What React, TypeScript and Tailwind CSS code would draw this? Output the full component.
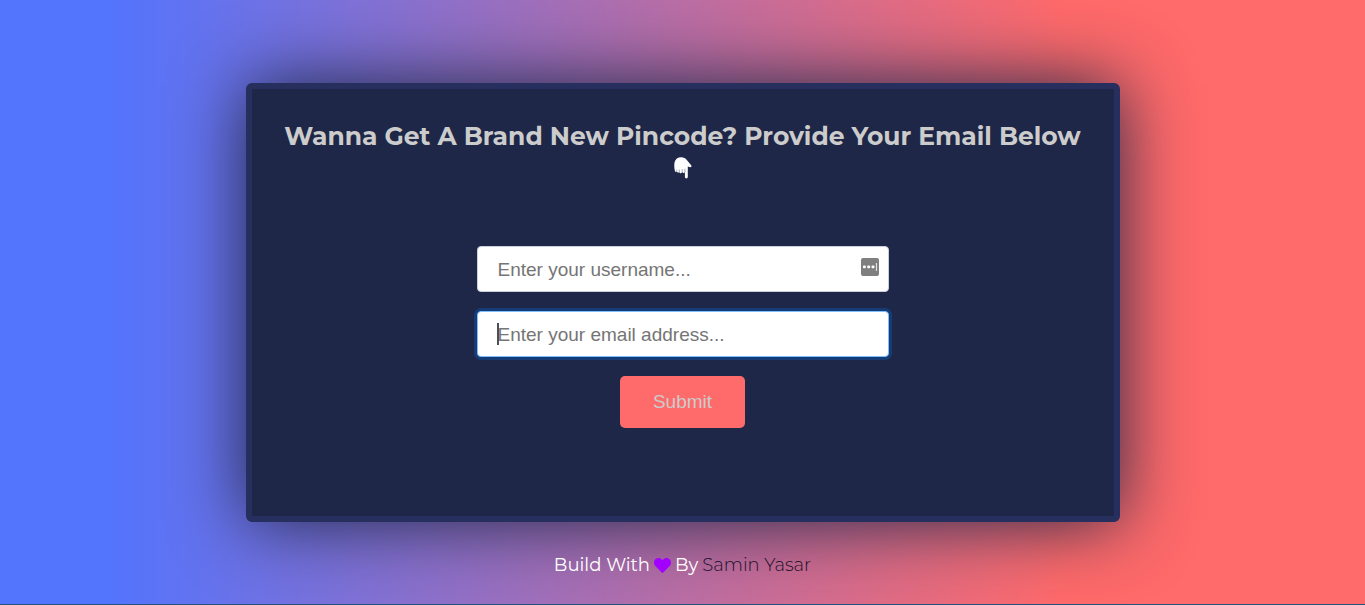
import React from "react";

function HandPointingDown() {
  return (
    <svg viewBox="0 0 18 22" className="h-[22px] w-[18px]" fill="#ffffff" aria-hidden="true">
      <path d="M1 14.2C0.3 11.2 0 8.2 0.5 5.4C1.2 2 3.9 0.2 7.2 0.2C9.8 0.2 11.4 1.2 12.8 3L17.2 8.2C18 9.3 17.1 10.5 15.9 10.2L13.8 9.4V19.8C13.8 21.9 10.9 21.9 10.9 19.8V15C10.6 16.4 8.6 16.5 8.2 15.1C7.8 16.6 5.6 16.6 5.2 15C4.6 16.2 3 16 2.7 14.6C2.2 15.2 1.2 15 1 14.2Z" />
      <path d="M2.8 14.6V12.6M5.3 15.2V12.6M8.2 15.2V12.2M10.9 15.4V11.8" stroke="#1e2747" strokeWidth="0.4" fill="none" />
    </svg>
  );
}

function PasswordIcon() {
  return (
    <svg viewBox="0 0 18 18" className="h-[18px] w-[18px]" aria-hidden="true">
      <rect width="18" height="18" rx="2" fill="#7f7f7f" />
      <rect x="2" y="7.5" width="2.8" height="2.8" rx="0.8" fill="#fff" />
      <rect x="6.3" y="7.5" width="2.8" height="2.8" rx="0.8" fill="#fff" />
      <rect x="10.6" y="7.5" width="2.8" height="2.8" rx="0.8" fill="#fff" />
      <path d="M15.5 5V13" stroke="#e0e0e0" strokeWidth="1.2" />
    </svg>
  );
}

function Heart() {
  return (
    <svg viewBox="0 0 512 512" className="h-[17px] w-[17px]" fill="#a200ff" role="img" aria-label="love">
      <path d="M462.3 62.6C407.5 15.9 326 24.3 275.7 76.2L256 96.5l-19.7-20.3C186.1 24.3 104.5 15.9 49.7 62.6c-62.8 53.6-66.1 149.8-9.9 207.9l193.5 199.8c12.5 12.9 32.8 12.9 45.3 0l193.5-199.8c56.3-58.1 53-154.3-9.8-207.9z" />
    </svg>
  );
}

export default function App() {
  return (
    <div className="flex min-h-screen flex-col border-b border-[#24527e] bg-[linear-gradient(to_right,#5374fd_8%,#ff6a6a_78%)] font-[Montserrat,Inter,sans-serif]">
      <main className="mx-auto mt-[83px] flex w-full max-w-[874px] flex-col items-center rounded-md border-6 border-[#262f5e] bg-[#1e2747] px-6 pt-[31px] pb-[88px] shadow-[0_0_72px_#1e2747]">
        <h1 className="text-center text-[25px] leading-8 font-bold text-[#cccccc]">
          Wanna Get A Brand New Pincode? Provide Your Email Below
        </h1>
        <div className="mt-1 flex h-6 items-center">
          <HandPointingDown />
        </div>
        <form className="mt-[66px] flex w-full max-w-[412px] flex-col items-center gap-[19px] font-['Liberation_Sans',Arial,sans-serif]">
          <div className="relative w-full">
            <input
              type="text"
              aria-label="Username"
              placeholder="Enter your username..."
              className="block h-[46px] w-full rounded border border-[#c9d0dc] bg-white px-5 pt-0.5 text-[19px] text-gray-800 outline-none placeholder:text-[#757575]"
            />
            <span className="pointer-events-none absolute top-3 right-[10px]">
              <PasswordIcon />
            </span>
          </div>
          <div className="relative w-full">
            <input
              type="email"
              aria-label="Email address"
              placeholder="Enter your email address..."
              className="block h-[46px] w-full rounded border border-[#80bdff] bg-white px-5 pt-0.5 text-[19px] text-gray-800 shadow-[0_0_0_3px_rgba(0,123,255,0.25)] outline-none placeholder:text-[#757575]"
            />
            <span className="pointer-events-none absolute top-3 left-5 h-[22px] w-0.5 bg-[#495057]" />
          </div>
          <button type="submit" className="h-[52px] w-[125px] rounded-[5px] bg-[#ff6a6a] text-[19px] text-[#cccccc]">
            Submit
          </button>
        </form>
      </main>
      <footer className="mt-[31px] flex items-center justify-center gap-1 pb-4 text-[18px] leading-6 text-white">
        <span>Build With</span>
        <Heart />
        <span>By</span>
        <a href="#samin-yasar" className="font-light text-[#1a0f2a]">
          Samin Yasar
        </a>
      </footer>
    </div>
  );
}
